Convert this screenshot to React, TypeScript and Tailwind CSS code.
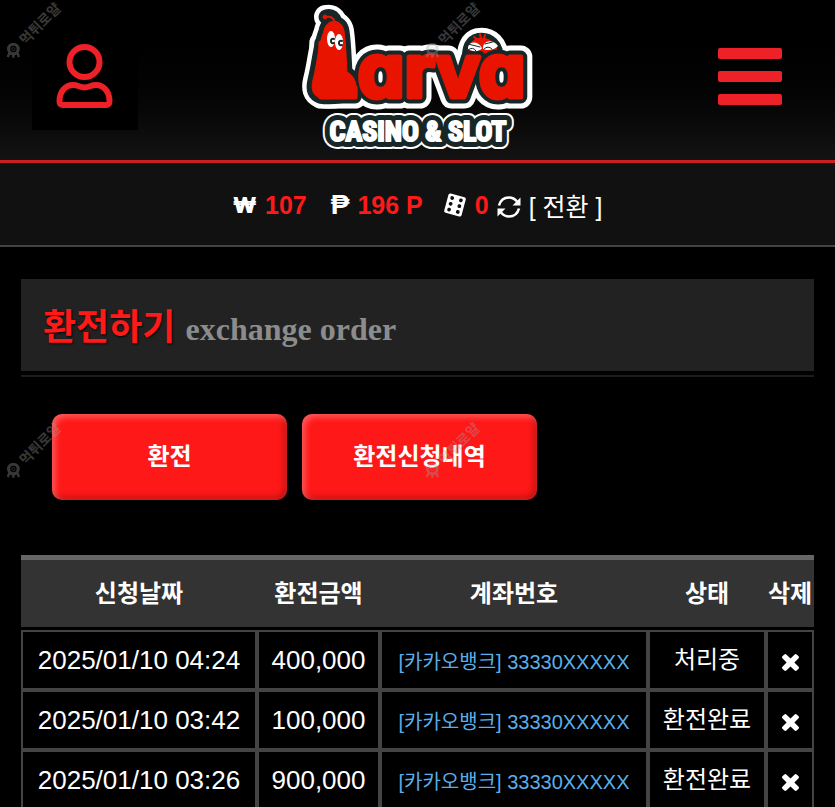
const ORDERS = [
  { date: "2025/01/10 04:24", amount: "400,000", account: "[카카오뱅크] 33330XXXXX", status: "처리중" },
  { date: "2025/01/10 03:42", amount: "100,000", account: "[카카오뱅크] 33330XXXXX", status: "환전완료" },
  { date: "2025/01/10 03:26", amount: "900,000", account: "[카카오뱅크] 33330XXXXX", status: "환전완료" },
];

const BODY =
  "M34 31C36 18 52 18 54 31C56 45 56 58 57 72C63 75 67 82 66 90C62 98 40 100 30 98C22 95 21 88 23 80C28 60 28 46 34 31Z";
const HEAD = "M177 62C176 48 180 40 188 38C200 36 209 44 209 60Z";
const ANTENNA = "M45 22C43 17 40 16 36 17";

function Logo() {
  const word = (
    <text x="26" y="97" className="font-['Inter'] text-[74px] font-bold [font-feature-settings:'cv11']">
      Larva
    </text>
  );
  const tagline = (
    <text x="128" y="141" textAnchor="middle" className="font-['Roboto_Condensed'] text-[28px] font-bold">
      CASINO &amp; SLOT
    </text>
  );

  return (
    <svg viewBox="-2 0 260 160" className="h-40 w-65" strokeLinejoin="round" strokeLinecap="round">
      {/* white halo */}
      <g fill="#fff" stroke="#fff">
        <g strokeWidth="23">{word}</g>
        <path d={BODY} strokeWidth="20" />
        <path d={HEAD} strokeWidth="20" />
        <path d={ANTENNA} strokeWidth="24" />
        <g strokeWidth="16">{tagline}</g>
      </g>
      {/* dark outline */}
      <g fill="#172626" stroke="#172626">
        <path d={HEAD} strokeWidth="10" />
        <path d={ANTENNA} strokeWidth="15" />
        <g strokeWidth="12">{tagline}</g>
      </g>
      <path d={HEAD} fill="#e91400" />
      <path d="M191 39l-1-5M188 40l-4-3M194 39l1-4" fill="none" stroke="#e91400" strokeWidth="2" />
      <g fill="#172626" stroke="#172626">
        <g strokeWidth="13">{word}</g>
        <path d={BODY} strokeWidth="11" />
      </g>
      <path
        d="M178 47C180 41 188 41 192 48C190 52 182 52 178 49ZM193 47C194 40 204 39 208 46C205 50 197 51 193 49Z"
        fill="#fff"
      />
      <path d="M178 50q5-4 8 1M194 49q4-4 8 0M178 44l12 3M195 44l11-3" fill="none" stroke="#172626" strokeWidth="1" />
      {/* red fill */}
      <g fill="#e91400" stroke="#e91400">
        <g strokeWidth="5">{word}</g>
        <path d={BODY} strokeWidth="1" />
        <path d={ANTENNA} fill="none" strokeWidth="2" />
        <circle cx="35" cy="17" r="2" />
      </g>
      <ellipse cx="41" cy="39" rx="4" ry="8" fill="#fff" />
      <ellipse cx="49" cy="42" rx="4" ry="8" fill="#fff" />
      <path d="M44 39q-3-1-3 2t3 2M52 41q-3-1-3 2t3 2" fill="none" stroke="#172626" strokeWidth="2" />
      <g fill="#fff" stroke="#fff" strokeWidth="2">
        {tagline}
      </g>
    </svg>
  );
}

function UserIcon() {
  return (
    <svg viewBox="0 0 106 106" className="size-full" fill="none" stroke="#ee2028" strokeWidth="6">
      <circle cx="52.5" cy="38" r="15" />
      <path d="M31 81Q27.500 81 27.500 77C27.500 67 34 61 41 61C46 61 48 63.500 52.500 63.500C57 63.500 59 61 64 61C71 61 77.500 67 77.500 77Q77.500 81 74 81Z" />
    </svg>
  );
}

function DiceIcon() {
  return (
    <svg viewBox="0 0 24 24" className="size-6" fill="#fff">
      <g transform="rotate(15 12 12)">
        <rect x="3" y="2" width="18" height="20" rx="2" />
        <g fill="#111">
          <circle cx="7.500" cy="6" r="1.900" />
          <circle cx="7.500" cy="12" r="1.900" />
          <circle cx="7.500" cy="18" r="1.900" />
          <circle cx="16.500" cy="6" r="1.900" />
          <circle cx="16.500" cy="12" r="1.900" />
          <circle cx="16.500" cy="18" r="1.900" />
        </g>
      </g>
    </svg>
  );
}

function RefreshIcon() {
  return (
    <svg viewBox="0 0 24 24" className="size-6">
      <g fill="none" stroke="#fff" strokeWidth="2.600">
        <path d="M2 10.500C3.500 5 7.500 2.500 12 2.500C15.500 2.500 18 4 20 6.500" />
        <path d="M22 13.500C20.500 19 16.500 21.500 12 21.500C8.500 21.500 6 20 4 17.500" />
      </g>
      <path d="M23.500 2.500V10.500H15.500ZM0.500 21.500V13.500H8.500Z" fill="#fff" />
    </svg>
  );
}

function CloseIcon() {
  return (
    <svg viewBox="110 -18 1188 1188" className="size-[17px]" fill="#fff">
      <path d="M1298 214q0 -40 -28 -68l-136 -136q-28 -28 -68 -28t-68 28l-294 294l-294 -294q-28 -28 -68 -28t-68 28l-136 136q-28 28 -28 68t28 68l294 294l-294 294q-28 28 -28 68t28 68l136 136q28 28 68 28t68 -28l294 -294l294 294q28 28 68 28t68 -28l136 -136q28 -28 28 -68t-28 -68l-294 -294l294 -294q28 -28 28 -68z" />
    </svg>
  );
}

function Watermark({ className }: { className: string }) {
  return (
    <div
      aria-hidden="true"
      className={`pointer-events-none absolute flex h-5 w-20 -rotate-45 items-center gap-1 text-sm leading-5 font-bold whitespace-nowrap text-[#a0a0a0] opacity-35 ${className}`}
    >
      <svg viewBox="0 0 20 20" className="size-4 shrink-0 rotate-45" fill="none" stroke="currentColor">
        <circle cx="10" cy="8" r="6" strokeWidth="4" />
        <circle cx="10" cy="8" r="2" strokeWidth="1" />
        <path d="M5 13l-2 5M15 13l2 5M10 15v4" strokeWidth="3" />
      </svg>
      먹튀로얄
    </div>
  );
}

export default function App() {
  return (
    <div className="relative min-h-screen overflow-hidden bg-black font-['Liberation_Sans','Noto_Sans_CJK_KR',sans-serif] text-white">
      <header className="grid grid-cols-[1fr_auto_1fr] items-start border-b-3 border-[#c8201f] bg-linear-to-b from-black to-[#131313]">
        <button type="button" aria-label="내 정보" className="mt-6 ml-8 size-[106px] bg-black">
          <UserIcon />
        </button>
        <a href="#" aria-label="Larva Casino &amp; Slot">
          <Logo />
        </a>
        <button type="button" aria-label="메뉴" className="mt-12 mr-[53px] flex w-16 flex-col gap-3 justify-self-end">
          <span className="h-[11px] w-full rounded-xs bg-[#ee2028]" />
          <span className="h-[11px] w-full rounded-xs bg-[#ee2028]" />
          <span className="h-[11px] w-full rounded-xs bg-[#ee2028]" />
        </button>
      </header>

      <div className="flex h-[84px] items-center justify-center border-b-2 border-[#444] bg-[#111] pt-0.5 text-[25px] leading-8 font-bold text-[#ff1a1a]">
        <span className="mr-2 font-['Inter'] text-[22px] font-black text-white">₩</span>
        <span>107</span>
        <span className="mr-2 ml-6 text-[28px] text-white">₱</span>
        <span>196 P</span>
        <span className="mr-2 ml-5">
          <DiceIcon />
        </span>
        <span>0</span>
        <button type="button" className="ml-2 flex items-center gap-2 pt-1 font-normal text-white">
          <RefreshIcon />[ 전환 ]
        </button>
      </div>

      <main className="px-[21px] pt-8">
        <div className="border-b-2 border-[#1c1c1c] pb-1">
          <h1 className="flex h-[92px] items-baseline gap-[10px] bg-[#222] px-[22px] pt-[22px] text-4xl leading-[54px] font-bold text-[#ff1a1a] text-shadow-[1px_1px_2px_#000]">
            환전하기
            <small className="font-['Liberation_Serif'] text-[32px] text-[#8c8c8c] text-shadow-none">exchange order</small>
          </h1>
        </div>

        <div className="mt-[37px] flex gap-[15px] px-[31px]">
          {["환전", "환전신청내역"].map((label) => (
            <button
              key={label}
              type="button"
              className="h-[86px] w-[235px] rounded-[10px] bg-[#ff1818] text-2xl font-bold shadow-[inset_3px_3px_6px_rgba(255,255,255,0.3),inset_-3px_-3px_6px_rgba(0,0,0,0.25)]"
            >
              {label}
            </button>
          ))}
        </div>

        <table className="mt-[55px] w-full table-fixed border-separate border-spacing-0 text-center">
          <colgroup>
            <col className="w-[236px]" />
            <col className="w-[123px]" />
            <col />
            <col className="w-[118px]" />
            <col className="w-12" />
          </colgroup>
          <thead>
            <tr className="h-[75px] text-2xl">
              {["신청날짜", "환전금액", "계좌번호", "상태", "삭제"].map((label) => (
                <th key={label} className="border-t-5 border-b-3 border-t-[#666] border-b-black bg-[#333] p-0 whitespace-nowrap">
                  {label}
                </th>
              ))}
            </tr>
          </thead>
          <tbody>
            {ORDERS.map((order) => (
              <tr key={order.date} className="h-15 whitespace-nowrap">
                <td className="border-2 border-[#444] p-0 text-[26px]">{order.date}</td>
                <td className="border-2 border-[#444] p-0 text-[26px]">{order.amount}</td>
                <td className="border-2 border-[#444] p-0 pt-1 text-xl text-[#5aaeea]">{order.account}</td>
                <td className="border-2 border-[#444] p-0 text-2xl">{order.status}</td>
                <td className="border-2 border-[#444] p-0">
                  <button type="button" aria-label="삭제" className="flex w-full justify-center pt-1">
                    <CloseIcon />
                  </button>
                </td>
              </tr>
            ))}
          </tbody>
        </table>
      </main>

      <Watermark className="top-[18px] -left-1" />
      <Watermark className="top-[18px] left-[415px]" />
      <Watermark className="top-[438px] -left-1" />
      <Watermark className="top-[438px] left-[415px]" />
    </div>
  );
}
